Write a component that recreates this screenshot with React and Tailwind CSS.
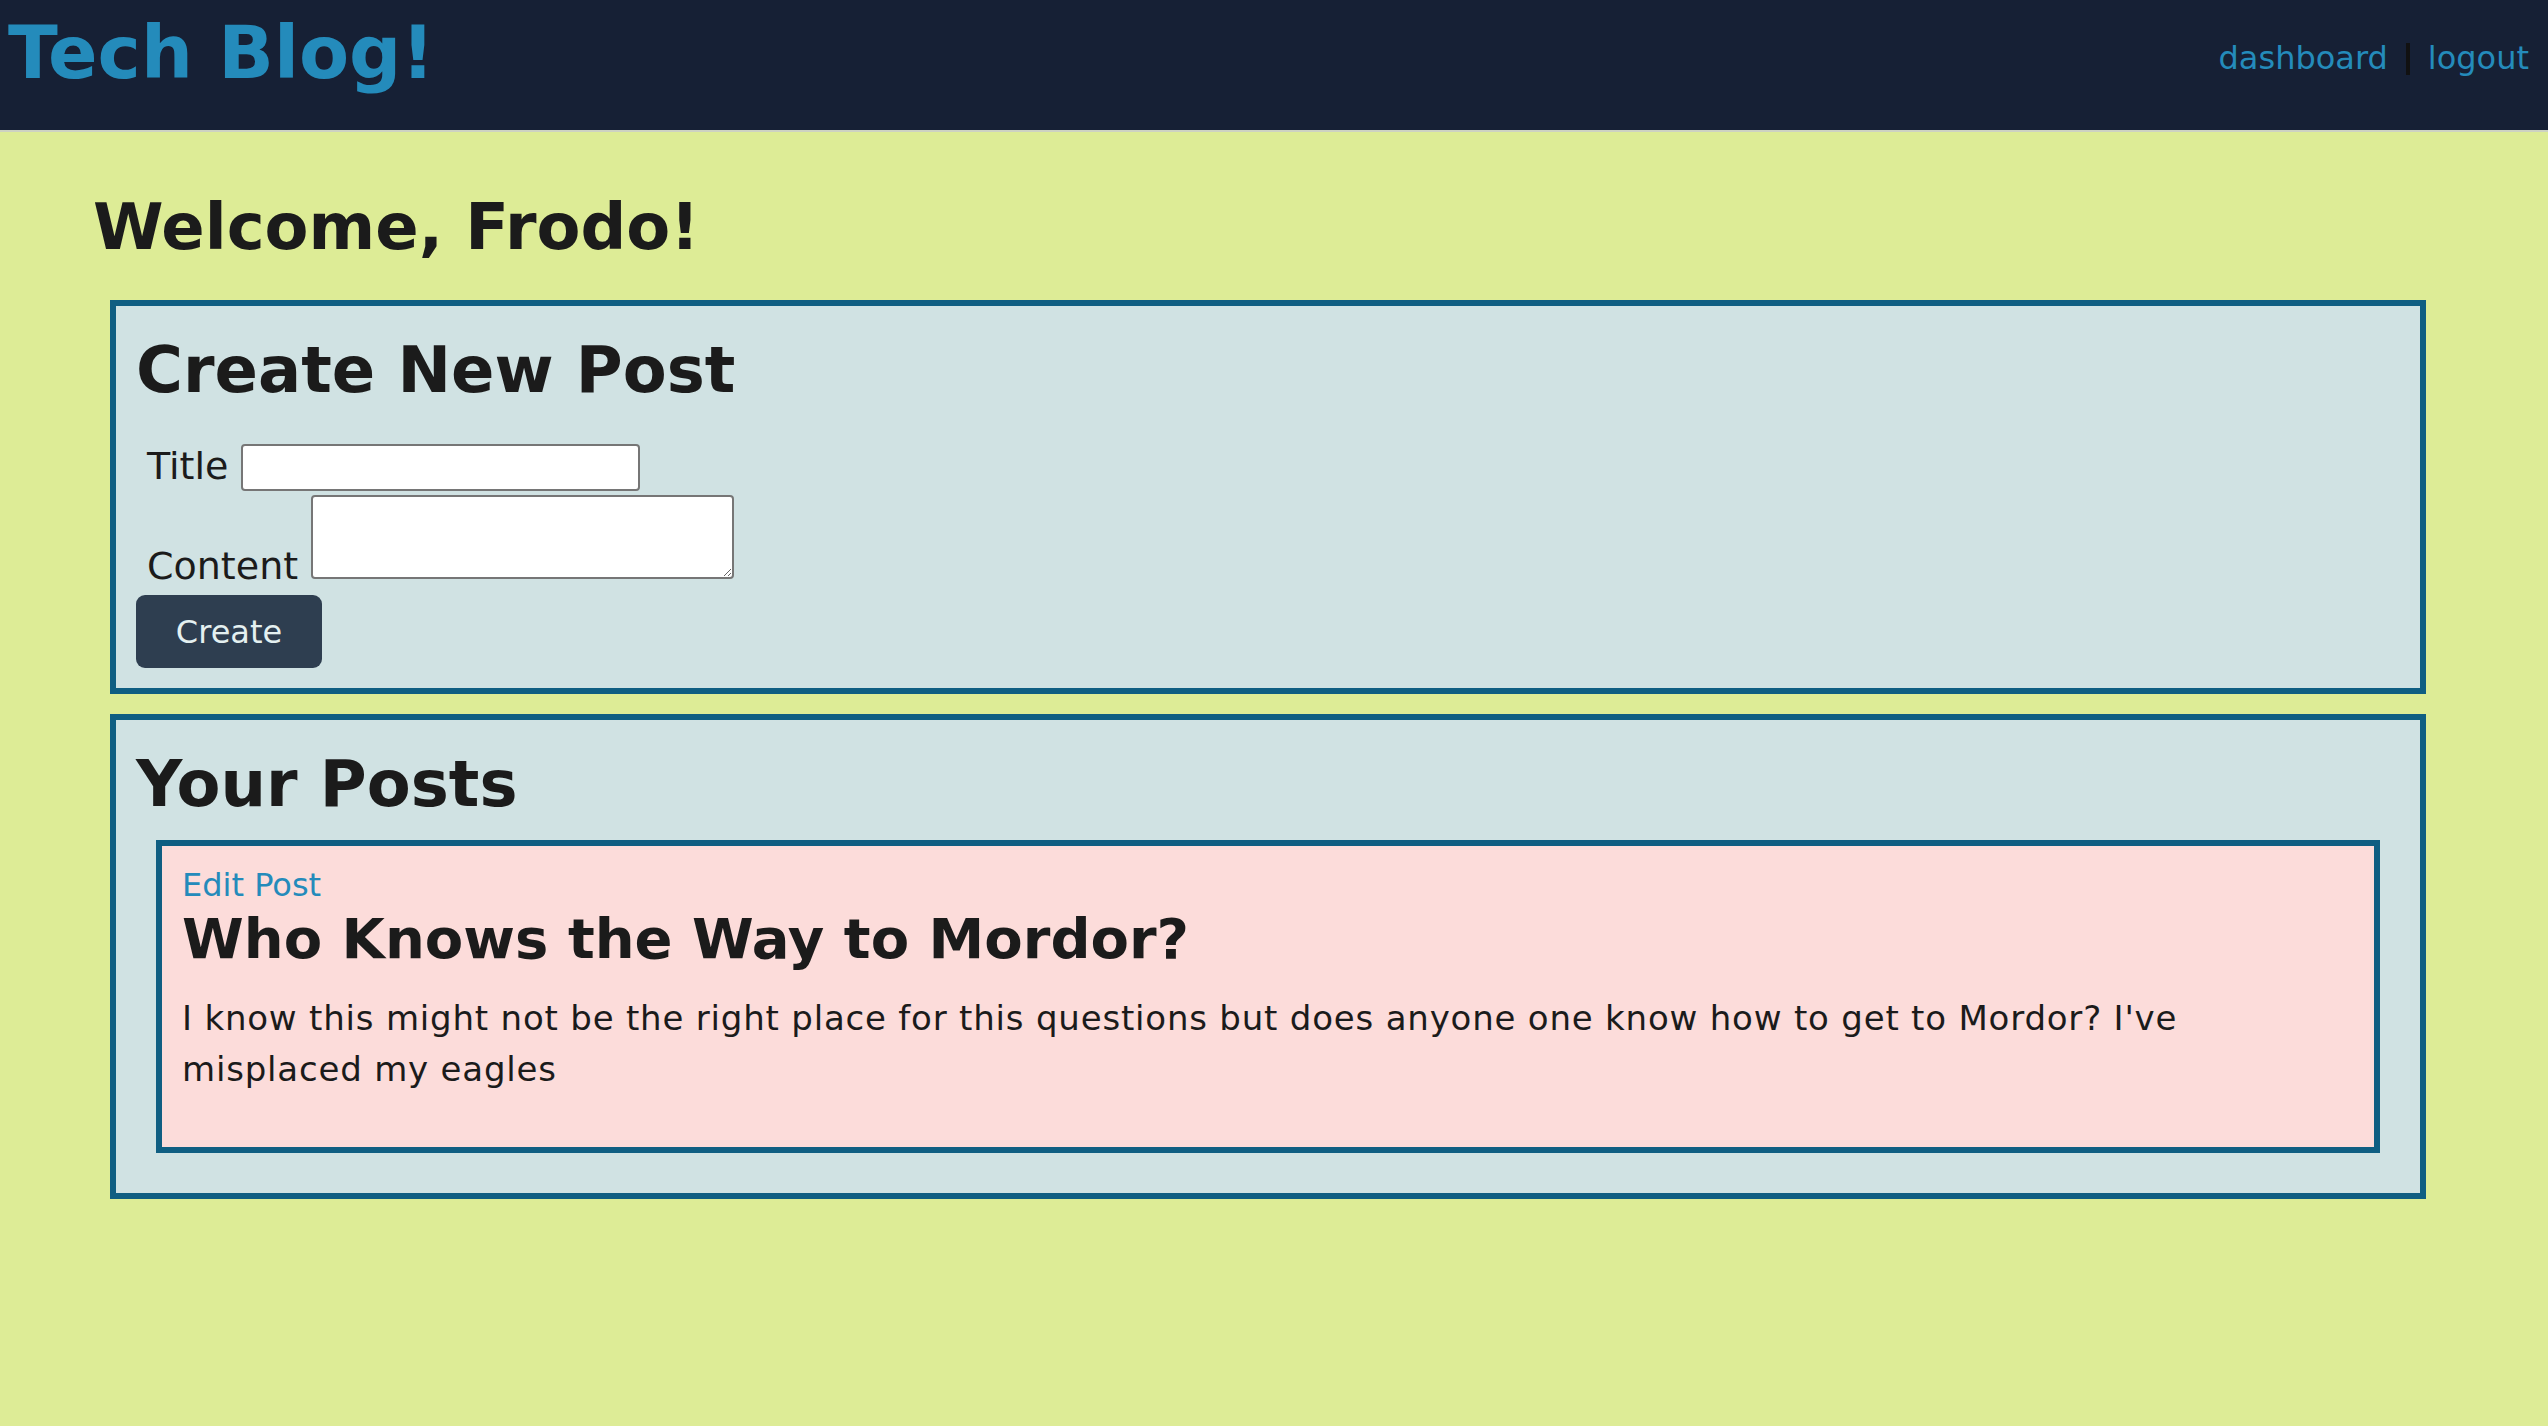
export default function App() {
  return (
    <div className="min-h-screen bg-[#ddec96] font-['DejaVu_Sans',sans-serif] text-[#1b1b1b]">
      <header className="h-[132px] bg-[#162035] border-b-2 border-[#cdd2c2] flex justify-between items-start">
        <h1 className="pl-[8px] pt-[16px] text-[73px] leading-none font-bold text-[#248bbb]">Tech Blog!</h1>
        <nav className="pr-[19px] pt-[42px] text-[32px] leading-none flex items-start">
          <a className="text-[#248bbb]">dashboard</a>
          <span className="mx-[18px] w-[4px] h-[32px] mt-[1px] bg-[#111111]"></span>
          <a className="text-[#248bbb]">logout</a>
        </nav>
      </header>
      <main className="pb-[40px]">
        <h2 className="ml-[93px] mt-[63px] mb-[41px] text-[64px] leading-none font-bold">Welcome, Frodo!</h2>
        <section className="ml-[110px] mr-[122px] border-[6px] border-[#0f5e82] bg-[#d0e2e3] p-[20px]">
          <h2 className="mt-[12px] text-[64px] leading-none font-bold">Create New Post</h2>
          <div className="mt-[42px] pl-[11px] flex items-center gap-[13px] h-[47px]">
            <label className="text-[38px] leading-none -mt-[4px]">Title</label>
            <input type="text" className="h-[47px] w-[399px] bg-white border-2 border-[#767676] rounded-[4px]" />
          </div>
          <div className="mt-[4px] pl-[11px] flex items-end gap-[13px]">
            <label className="text-[38px] leading-none -mb-[6px]">Content</label>
            <textarea className="h-[84px] w-[423px] bg-white border-2 border-[#767676] rounded-[4px]"></textarea>
          </div>
          <button className="mt-[16px] w-[186px] h-[73px] rounded-[9px] bg-[#2e3e50] text-[#e4f0f0] text-[32px] leading-none">Create</button>
        </section>
        <section className="mt-[20px] ml-[110px] mr-[122px] border-[6px] border-[#0f5e82] bg-[#d0e2e3] p-[20px]">
          <h2 className="mt-[12px] text-[64px] leading-none font-bold">Your Posts</h2>
          <div className="mt-[24px] mx-[20px] mb-[20px] border-[6px] border-[#0f5e82] bg-[#fcdcda] px-[20px] pt-[23px] pb-[20px]">
            <a className="block text-[32px] leading-none text-[#248bbb]">Edit Post</a>
            <h3 className="mt-[10px] text-[56px] leading-none font-bold">Who Knows the Way to Mordor?</h3>
            <p className="mt-[26px] mb-[32px] text-[34px] leading-[51px] tracking-[0.8px]">
              I know this might not be the right place for this questions but does anyone one know how to get to Mordor? I've misplaced my eagles
            </p>
          </div>
        </section>
      </main>
    </div>
  );
}
